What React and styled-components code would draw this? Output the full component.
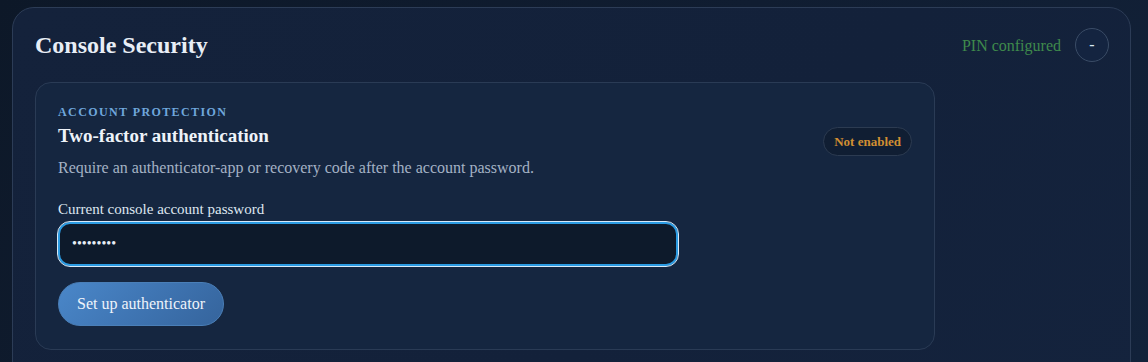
import React from 'react';
import styled, { createGlobalStyle } from 'styled-components';

const GlobalStyle = createGlobalStyle`
  html, body {
    margin: 0;
    padding: 0;
    background: linear-gradient(135deg, #0d1828 0%, #101d31 50%, #12223a 100%);
    font-family: "Liberation Serif", "Times New Roman", serif;
    color: #e6edf5;
  }
  body {
    height: 362px;
    overflow: hidden;
  }
`;

const Page = styled.div`
  padding: 7px 17px 0 12px;
`;

const Panel = styled.section`
  background: linear-gradient(135deg, #14223b 0%, #13213a 60%, #14233d 100%);
  border: 1px solid #2c3c56;
  border-radius: 22px;
  padding: 20px 22px 40px 22px;
  height: 400px;
  box-sizing: border-box;
`;

const Header = styled.div`
  display: flex;
  align-items: center;
  justify-content: space-between;
  height: 34px;
`;

const Title = styled.h2`
  margin: 0;
  font-size: 24px;
  font-weight: 700;
  color: #e8eef6;
`;

const Status = styled.div`
  display: flex;
  align-items: center;
  gap: 14px;
  margin-right: -1px;
`;

const StatusText = styled.span`
  font-size: 16px;
  color: #3f8a4c;
  padding-top: 1px;
`;

const RoundButton = styled.button`
  width: 34px;
  height: 34px;
  border-radius: 50%;
  border: 1px solid #3a4c66;
  background: #142440;
  color: #dbe6f2;
  font-family: inherit;
  font-size: 16px;
  padding: 0;
  display: flex;
  align-items: center;
  justify-content: center;
`;

const Card = styled.div`
  margin-top: 20px;
  width: 900px;
  box-sizing: border-box;
  background: #152640;
  border: 1px solid #2a3b55;
  border-radius: 16px;
  padding: 22px 22px 23px;
`;

const CardTop = styled.div`
  display: flex;
  align-items: center;
  justify-content: space-between;
`;

const Eyebrow = styled.div`
  font-size: 12px;
  font-weight: 700;
  letter-spacing: 1.4px;
  text-transform: uppercase;
  color: #6fa6dc;
  line-height: 14px;
`;

const CardTitle = styled.h3`
  margin: 6px 0 0;
  font-size: 19px;
  font-weight: 700;
  color: #eef3f9;
  line-height: 22px;
`;

const Description = styled.p`
  margin: 11px 0 0;
  font-size: 16px;
  color: #a4b2c5;
  line-height: 20px;
`;

const Badge = styled.span`
  display: inline-flex;
  align-items: center;
  height: 29px;
  box-sizing: border-box;
  padding: 0 10px;
  border-radius: 15px;
  border: 1px solid #2c3b51;
  background: #101e33;
  color: #d18f32;
  font-size: 13px;
  font-weight: 700;
`;

const Label = styled.label`
  display: block;
  margin-top: 22px;
  font-size: 15px;
  color: #dfe7f1;
  line-height: 18px;
`;

const Input = styled.input`
  display: block;
  margin-top: 4px;
  width: 620px;
  height: 44px;
  box-sizing: border-box;
  padding: 0 12px;
  border-radius: 12px;
  border: 2px solid #2b9be2;
  outline: 1px solid #d6e9f8;
  outline-offset: 0;
  background: #0d1a2b;
  color: #e6edf5;
  font-family: "Liberation Serif", serif;
  font-size: 14px;
`;

const PrimaryButton = styled.button`
  margin-top: 16px;
  height: 44px;
  padding: 0 18px;
  border-radius: 22px;
  border: 1px solid #4a7fb8;
  background: linear-gradient(135deg, #4a87c9 0%, #3f75b3 50%, #35649c 100%);
  color: #edf3fa;
  font-family: inherit;
  font-size: 16px;
`;

export default function App() {
  return (
    <>
      <GlobalStyle />
      <Page>
        <Panel>
          <Header>
            <Title>Console Security</Title>
            <Status>
              <StatusText>PIN configured</StatusText>
              <RoundButton>-</RoundButton>
            </Status>
          </Header>
          <Card>
            <CardTop>
              <div>
                <Eyebrow>Account protection</Eyebrow>
                <CardTitle>Two-factor authentication</CardTitle>
                <Description>
                  Require an authenticator-app or recovery code after the account password.
                </Description>
              </div>
              <Badge>Not enabled</Badge>
            </CardTop>
            <Label htmlFor="pw">Current console account password</Label>
            <Input id="pw" type="password" defaultValue="123456789" />
            <PrimaryButton>Set up authenticator</PrimaryButton>
          </Card>
        </Panel>
      </Page>
    </>
  );
}
